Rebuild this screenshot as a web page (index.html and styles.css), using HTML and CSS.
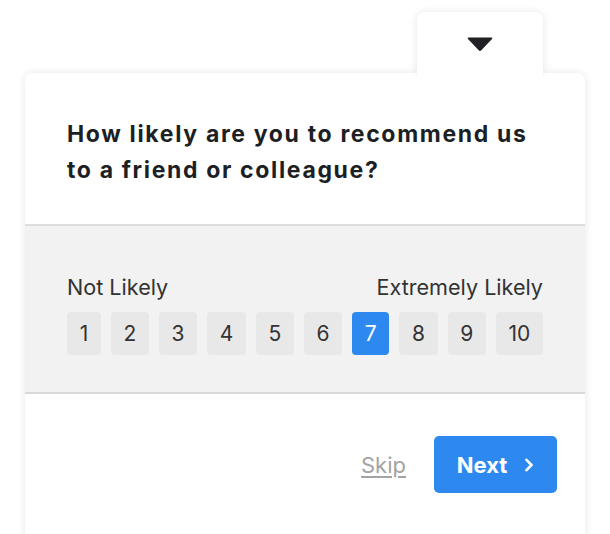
FILE: index.html
```html
<!DOCTYPE html>
<html>
<head>
<meta charset="utf-8">
<link rel="stylesheet" href="styles.css">
</head>
<body>
<div class="widget">
  <div class="tab-row">
    <div class="tab">
      <svg class="caret" width="28" height="16" viewBox="0 0 28 16"><path d="M2.5 1.5 H25.5 Q27 1.5 26 3 L15.3 14.3 Q14 15.6 12.7 14.3 L2 3 Q1 1.5 2.5 1.5 Z" fill="#202124"/></svg>
    </div>
  </div>
  <div class="card">
    <div class="head">
      <h1 class="question">How likely are you to recommend us<br>to a friend or colleague?</h1>
    </div>
    <div class="scale">
      <div class="labels"><span>Not Likely</span><span>Extremely Likely</span></div>
      <div class="options">
        <button class="opt">1</button>
        <button class="opt">2</button>
        <button class="opt">3</button>
        <button class="opt">4</button>
        <button class="opt">5</button>
        <button class="opt">6</button>
        <button class="opt selected">7</button>
        <button class="opt">8</button>
        <button class="opt">9</button>
        <button class="opt">10</button>
      </div>
    </div>
    <div class="foot">
      <a class="skip">Skip</a>
      <button class="next">Next <svg class="chev" width="10" height="14" viewBox="0 0 10 14"><path d="M2.5 1.8 L7.5 7 L2.5 12.2" fill="none" stroke="#fff" stroke-width="2.6" stroke-linecap="round" stroke-linejoin="round"/></svg></button>
    </div>
  </div>
</div>
</body>
</html>
```
FILE: styles.css
```css
* { box-sizing: border-box; }
html, body { margin: 0; padding: 0; background: #fff; }
body { font-family: Inter, "Helvetica Neue", Arial, sans-serif; color: #222; overflow: hidden; height: 534px; }
.widget { padding: 12px 25px 0 25px; }
.tab-row { display: flex; justify-content: flex-end; padding-right: 42px; }
.tab {
  width: 126px; height: 62px; background: #fff;
  border-radius: 8px 8px 0 0;
  box-shadow: 0 0 8px rgba(0,0,0,0.10);
  display: flex; justify-content: center; padding-top: 24px;
  position: relative; z-index: 2;
}
.caret { display: block; }
.card {
  background: #fff; border-radius: 8px 8px 0 0;
  box-shadow: 0 0 8px rgba(0,0,0,0.10);
  height: 470px; margin-top: -1px; position: relative; z-index: 1;
}
.tab::after { content: ""; position: absolute; left: 0; right: 0; bottom: -10px; height: 12px; background: #fff; }
.head { padding: 43px 30px 36px 42px; border-bottom: 2px solid #dedede; }
.question { margin: 0; font-size: 23px; line-height: 36px; font-weight: 700; color: #1c1f23; letter-spacing: 1.65px; white-space: nowrap; }
.scale { background: #f2f2f2; padding: 49px 42px 37px 42px; border-bottom: 2px solid #d9d9d9; }
.labels { display: flex; justify-content: space-between; font-size: 21.6px; line-height: 24px; color: #333; margin-bottom: 13px; }
.options { display: flex; gap: 10px; }
.opt {
  flex: 1 1 auto; height: 43px; border: 0; border-radius: 4px;
  background: #e8e8e8; color: #333; font-family: inherit; font-size: 21px;
  padding: 0 2px;
}
.opt.selected { background: #2d89ef; color: #fff; }
.foot { display: flex; justify-content: flex-end; align-items: center; gap: 28px; padding: 42px 28px 0 0; }
.skip { font-size: 22px; color: #a3a3a3; text-decoration: underline; text-underline-offset: 3px; }
.next {
  width: 123px; height: 57px; border: 0; border-radius: 5px;
  background: #2d89ef; color: #fff; font-family: inherit; font-size: 22px; font-weight: 700;
  display: flex; align-items: center; justify-content: center; gap: 17px; padding: 0 0 0 0;
}
.chev { display: block; }
```
